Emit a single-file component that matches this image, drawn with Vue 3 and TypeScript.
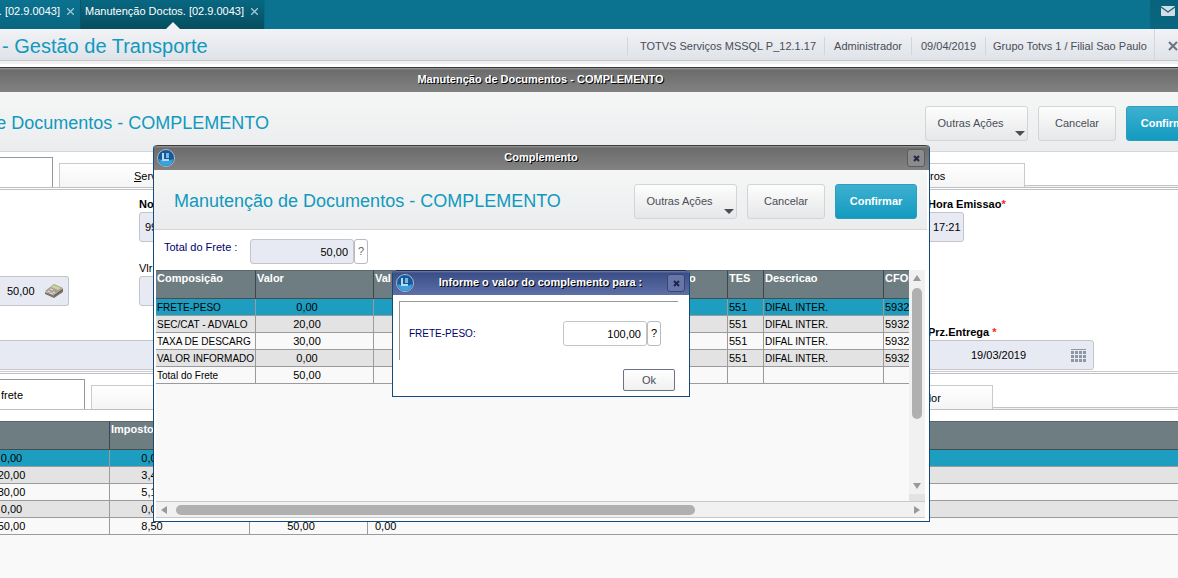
<script setup lang="ts">
import { ref } from 'vue'

interface FreightRow {
  name: string
  value: string
  tes: string
  description: string
  cfop: string
}

const freightRows: FreightRow[] = [
  { name: 'FRETE-PESO', value: '0,00', tes: '551', description: 'DIFAL INTER.', cfop: '5932' },
  { name: 'SEC/CAT - ADVALO', value: '20,00', tes: '551', description: 'DIFAL INTER.', cfop: '5932' },
  { name: 'TAXA DE DESCARG', value: '30,00', tes: '551', description: 'DIFAL INTER.', cfop: '5932' },
  { name: 'VALOR INFORMADO', value: '0,00', tes: '551', description: 'DIFAL INTER.', cfop: '5932' },
  { name: 'Total do Frete', value: '50,00', tes: '', description: '', cfop: '' },
]

const totalRows: string[][] = [
  ['0,00', '0,00', '', ''],
  ['20,00', '3,40', '', ''],
  ['30,00', '5,10', '', ''],
  ['0,00', '0,00', '', ''],
  ['50,00', '8,50', '50,00', '0,00'],
]

const session: string[] = [
  'TOTVS Serviços MSSQL P_12.1.17',
  'Administrador',
  '09/04/2019',
  'Grupo Totvs 1 / Filial Sao Paulo',
]

const total = ref('50,00')
const amount = ref('100,00')
const deliveryDate = ref('19/03/2019')
const issueTime = ref('17:21')
const docValue = ref('50,00')
const docNumber = ref('99')
const docFee = ref('')
const notes = ref('')
</script>

<template>
  <div class="app">
    <nav class="topbar">
      <div class="top-tab first">
        <a href="#">. [02.9.0043]</a>
        <button type="button" aria-label="Fechar aba">
          <svg width="7" height="7" viewBox="0 0 7 7"><path d="M0 0L7 7M7 0L0 7" stroke="#9fc6d2" stroke-width="1.3" /></svg>
        </button>
      </div>
      <div class="top-tab active">
        <a href="#">Manutenção Doctos. [02.9.0043]</a>
        <button type="button" aria-label="Fechar aba">
          <svg width="7" height="7" viewBox="0 0 7 7"><path d="M0 0L7 7M7 0L0 7" stroke="#9fc6d2" stroke-width="1.3" /></svg>
        </button>
        <i class="pointer"></i>
      </div>
      <button class="mail" type="button" aria-label="Mensagens">
        <svg width="14" height="10" viewBox="0 0 14 10">
          <path d="M0 1Q0 0 1 0H13Q14 0 14 1V9Q14 10 13 10H1Q0 10 0 9Z" fill="#d3dde3" />
          <path d="M0 1L7 6L14 1" fill="none" stroke="#0a6a86" stroke-width="1.4" />
        </svg>
      </button>
    </nav>

    <header class="session">
      <h1>- Gestão de Transporte</h1>
      <ul>
        <li v-for="item in session" :key="item"><span>{{ item }}</span></li>
      </ul>
      <button class="leave" type="button" aria-label="Sair">
        <svg width="10" height="10" viewBox="0 0 10 10"><path d="M1 1L9 9M9 1L1 9" stroke="#6b7380" stroke-width="2" /></svg>
      </button>
    </header>

    <main class="window">
      <div class="titlebar wide"><strong>Manutenção de Documentos - COMPLEMENTO</strong></div>
      <div class="toolbar page-toolbar">
        <h2><span>e Documentos - COMPLEMENTO</span></h2>
        <div class="actions">
          <button class="btn more" type="button">Outras Ações</button>
          <button class="btn cancel" type="button">Cancelar</button>
          <button class="btn primary" type="button">Confirmar</button>
        </div>
      </div>

      <div class="strip">
        <button class="tab current" type="button" aria-label="Aba atual"></button>
        <button class="tab middle" type="button"><u>S</u>erv</button>
        <button class="tab last" type="button">ros</button>
        <i class="rest"></i>
      </div>

      <form class="doc-form" @submit.prevent>
        <div class="left"></div>
        <div class="mid field">
          <label class="required" for="doc-number">No</label>
          <input id="doc-number" v-model="docNumber" class="box number" />
        </div>
        <div class="right field">
          <label class="required" for="issue-time">Hora Emissao<em>*</em></label>
          <input id="issue-time" v-model="issueTime" class="box time" />
        </div>

        <div class="left field">
          <div class="box value">
            <input v-model="docValue" aria-label="Valor" />
            <button type="button" aria-label="Calculadora">
              <svg width="19" height="14" viewBox="0 0 19 14">
                <path d="M0 8L9 11L18 5V8L9 14L0 10Z" fill="#7d716a" />
                <path d="M0 7L9 0L18 4L9 12Z" fill="#a99f94" />
                <path d="M9 1L16 4L13 6L6 3Z" fill="#c3d89a" />
                <path d="M3 7L5 8M5 5L8 6M5 9L8 10M8 8L10 9" stroke="#e8e0d8" stroke-width="1.2" />
                <path d="M9 12L18 5" stroke="#5f554f" stroke-width="1" />
              </svg>
            </button>
          </div>
        </div>
        <div class="mid field">
          <label for="doc-fee">Vlr</label>
          <input id="doc-fee" v-model="docFee" class="box number" />
        </div>
        <div class="right"></div>

        <div class="notes field">
          <input v-model="notes" class="box" aria-label="Observações" />
        </div>
        <div class="right field">
          <label class="required" for="delivery">Prz.Entrega <em>*</em></label>
          <div class="box date">
            <input id="delivery" v-model="deliveryDate" />
            <button type="button" aria-label="Calendário">
              <svg width="15" height="13" viewBox="0 0 15 13" fill="#8d96a3">
                <path d="M0 0H15V1H0Z" />
                <path d="M0 2h3v3H0zM4 2h3v3H4zM8 2h3v3H8zM12 2h3v3h-3zM0 6h3v3H0zM4 6h3v3H4zM8 6h3v3H8zM12 6h3v3h-3zM0 10h3v3H0zM4 10h3v3H4zM8 10h3v3H8zM12 10h3v3h-3z" />
              </svg>
            </button>
          </div>
        </div>
      </form>

      <div class="strip lower">
        <button class="tab current" type="button">frete</button>
        <button class="tab middle" type="button" aria-label="Aba"></button>
        <button class="tab last" type="button">dor</button>
        <i class="rest"></i>
      </div>

      <div class="page-grid">
        <table class="grid">
          <colgroup>
            <col class="p1" /><col class="p2" /><col class="p3" /><col />
          </colgroup>
          <thead>
            <tr><th></th><th>Imposto</th><th class="plain"></th><th class="plain"></th></tr>
          </thead>
          <tbody>
            <tr v-for="(row, index) in totalRows" :key="index">
              <td v-for="(cell, column) in row" :key="column" :class="'c' + column"><div>{{ cell }}</div></td>
            </tr>
          </tbody>
        </table>
      </div>
    </main>

    <section class="dialog outer" role="dialog" aria-label="Complemento">
      <div class="titlebar">
        <svg class="orb" width="18" height="18" viewBox="0 0 18 18">
          <circle cx="9" cy="9" r="8.5" fill="#17589a" stroke="#a9bccd" />
          <path d="M2 10Q9 14 16 10A7 7 0 0 1 2 10Z" fill="#38a3dc" />
          <path d="M5 4L7 4V10H12V12H5Z" fill="#b5daf0" />
          <path d="M9 4L12 4V9H9Z" fill="#78b8e0" />
        </svg>
        <strong>Complemento</strong>
        <button class="close" type="button" aria-label="Fechar">
          <svg width="7" height="7" viewBox="0 0 7 7"><path d="M1 1L6 6M6 1L1 6" stroke="#20264a" stroke-width="2" /></svg>
        </button>
      </div>
      <div class="toolbar">
        <h2>Manutenção de Documentos - COMPLEMENTO</h2>
        <div class="actions">
          <button class="btn more" type="button">Outras Ações</button>
          <button class="btn cancel" type="button">Cancelar</button>
          <button class="btn primary" type="button">Confirmar</button>
        </div>
      </div>
      <div class="total-row">
        <label for="total">Total do Frete :</label>
        <input id="total" v-model="total" class="num" />
        <button class="help" type="button">?</button>
      </div>
      <div class="grid-area">
        <div class="viewport">
          <table class="grid">
            <colgroup>
              <col class="g1" /><col class="g2" /><col class="g3" /><col class="g4" /><col class="g5" /><col class="g6" /><col class="g7" />
            </colgroup>
            <thead>
              <tr>
                <th>Composição</th><th>Valor</th><th>Val</th><th>o</th><th>TES</th><th>Descricao</th><th>CFOP</th>
              </tr>
            </thead>
            <tbody>
              <tr v-for="row in freightRows" :key="row.name">
                <td class="caps">{{ row.name }}</td>
                <td class="c2">{{ row.value }}</td>
                <td></td>
                <td></td>
                <td>{{ row.tes }}</td>
                <td class="caps">{{ row.description }}</td>
                <td>{{ row.cfop }}</td>
              </tr>
            </tbody>
          </table>
        </div>
        <div class="vscroll">
          <i class="arrow up"></i>
          <i class="thumb"></i>
          <i class="arrow down"></i>
        </div>
      </div>
      <div class="hscroll">
        <i class="arrow back"></i>
        <i class="thumb"></i>
        <i class="arrow next"></i>
      </div>
    </section>

    <section class="dialog inner" role="dialog" aria-label="Informe o valor do complemento para :">
      <div class="titlebar">
        <svg class="orb" width="18" height="18" viewBox="0 0 18 18">
          <circle cx="9" cy="9" r="8.5" fill="#17589a" stroke="#a9bccd" />
          <path d="M2 10Q9 14 16 10A7 7 0 0 1 2 10Z" fill="#38a3dc" />
          <path d="M5 4L7 4V10H12V12H5Z" fill="#b5daf0" />
          <path d="M9 4L12 4V9H9Z" fill="#78b8e0" />
        </svg>
        <strong>Informe o valor do complemento para :</strong>
        <button class="close" type="button" aria-label="Fechar">
          <svg width="7" height="7" viewBox="0 0 7 7"><path d="M1 1L6 6M6 1L1 6" stroke="#20264a" stroke-width="2" /></svg>
        </button>
      </div>
      <div class="group">
        <label for="amount">FRETE-PESO:</label>
        <input id="amount" v-model="amount" class="num" />
        <button class="help" type="button">?</button>
      </div>
      <div class="footer"><button class="ok" type="button">Ok</button></div>
    </section>
  </div>
</template>

<style>
body {
  margin: 0;
}
</style>

<style scoped>
.app {
  position: relative;
  display: flex;
  flex-direction: column;
  min-height: 100vh;
  overflow: hidden;
  background: #fff;
  color: #000;
  font: 11px/15px "Liberation Sans", Arial, sans-serif;
}
.app *,
.app *::after {
  box-sizing: border-box;
}
button,
input {
  margin: 0;
  padding: 0;
  border: 0;
  background: none;
  color: inherit;
  font: inherit;
}
input {
  min-width: 0;
}
h1,
h2,
ul {
  margin: 0;
  padding: 0;
  font-weight: normal;
  white-space: nowrap;
}
svg,
i {
  display: block;
}

/* top bar */
.topbar {
  display: flex;
  height: 29px;
  background: #0b7290;
}
.top-tab {
  position: relative;
  display: flex;
  align-items: center;
  justify-content: flex-end;
  gap: 7px;
  height: 29px;
  padding: 0 6px 6px 0;
  border-right: 1px solid #07566d;
  background: linear-gradient(#0b7290, #096580);
  color: #fff;
}
.top-tab a {
  color: #fff;
  text-decoration: none;
  white-space: nowrap;
}
.top-tab.first {
  width: 81px;
}
.top-tab.active {
  width: 184px;
  border-right-color: #096a86;
  background: linear-gradient(#086882, #064d5e);
}
.pointer {
  position: absolute;
  bottom: 0;
  left: 85px;
  border: 7px solid transparent;
  border-top: 0;
  border-bottom-color: #f1f2f5;
}
.mail {
  display: flex;
  justify-content: center;
  width: 28px;
  height: 29px;
  margin-left: auto;
  padding: 6px 0 0 8px;
  background: linear-gradient(#08627c, #0a6680);
}

/* session header */
.session {
  display: flex;
  align-items: center;
  height: 32px;
  overflow: hidden;
  border-bottom: 1px solid #c3c7cb;
  background: linear-gradient(#f1f2f5, #dfe3e8);
}
h1 {
  flex: 1;
  padding: 2px 2px 0;
  color: #1199be;
  font-size: 20px;
  line-height: 24px;
}
.session ul {
  display: flex;
  padding-top: 2px;
  list-style: none;
  color: #4a4d57;
}
.session li {
  display: flex;
  align-items: center;
  justify-content: center;
  width: 87px;
  height: 18px;
  padding-top: 1px;
  border-left: 1px solid #d2d5d9;
}
.session li:first-child {
  width: 197px;
  padding-left: 4px;
}
.session li:nth-child(3) {
  width: 74px;
}
.session li:nth-child(4) {
  width: 169px;
}
.leave {
  display: flex;
  flex: 0 0 21px;
  align-items: center;
  align-self: stretch;
  padding: 3px 0 0 13px;
  border-left: 1px solid #d2d5d9;
}
.leave svg {
  flex: none;
}

/* windows */
.window {
  display: flex;
  flex: 1;
  flex-direction: column;
  border-top: 3px solid #f0f0f0;
}
.titlebar {
  display: flex;
  align-items: center;
  height: 25px;
  border-top: 1px solid #3a3a3a;
  background: linear-gradient(#9c9c9c, #6c6c6c 2px, #828282);
  color: #fff;
  text-shadow: 1px 1px 0 #000;
}
.titlebar strong {
  flex: 1;
  padding-bottom: 2px;
  text-align: center;
}
.titlebar.wide {
  margin-top: 3px;
}
.titlebar.wide strong {
  flex: 0 1 1081px;
}
.toolbar {
  display: flex;
  align-items: center;
  justify-content: space-between;
  height: 60px;
  border-bottom: 1px solid #d6d7d8;
  background: linear-gradient(#f5f7f6, #ebecee);
}
h2 {
  color: #1199be;
  font-size: 18px;
  line-height: 22px;
}
.page-toolbar {
  padding-top: 4px;
  overflow: hidden;
}
.page-toolbar h2 {
  display: flex;
  justify-content: flex-end;
  width: 269px;
  padding-bottom: 2px;
}
.actions {
  display: flex;
  gap: 10px;
}
.page-toolbar .actions {
  margin-right: -30px;
}
.btn {
  position: relative;
  height: 35px;
  border: 1px solid #d3d4d6;
  border-radius: 3px;
  background: linear-gradient(#fdfdfd, #e6e7e8);
  color: #4a4d57;
}
.btn.more {
  width: 103px;
  padding-right: 12px;
}
.btn.more::after {
  position: absolute;
  right: 2px;
  bottom: 4px;
  border: 5px solid transparent;
  border-top-color: #4a4d57;
  border-bottom: 0;
  content: "";
}
.btn.cancel {
  width: 78px;
}
.btn.primary {
  width: 82px;
  border-color: #2b9dbd;
  background: linear-gradient(#3eb0d0, #129bc0);
  color: #fff;
  font-weight: bold;
}

/* tab strips */
.strip {
  display: flex;
  align-items: flex-end;
  gap: 6px;
  height: 36px;
  border-bottom: 1px solid #bebfc1;
}
.tab {
  flex: 0 0 835px;
  height: 24px;
  padding: 1px 0 0 74px;
  border: 1px solid #c9cacc;
  border-bottom: 0;
  background: linear-gradient(#fff, #f4f4f4);
  text-align: left;
}
.tab.current {
  flex-basis: 53px;
  height: 30px;
  padding-left: 1px;
  border-color: #97989a;
  border-left: 0;
  background: #fff;
}
.tab.last {
  flex-basis: 125px;
  padding-left: 29px;
}
.lower .current {
  flex-basis: 85px;
}
.lower .middle {
  flex-basis: 803px;
}
.lower .last {
  flex-basis: 93px;
  padding-left: 24px;
}
.rest {
  flex: 1;
  height: 2px;
  margin-left: -6px;
  border-top: 1px solid #c3c4c6;
  background: #f2f2f2;
}

/* document form */
.doc-form {
  display: grid;
  grid-template-columns: 139px 789px 1fr;
  grid-auto-rows: 45px;
  row-gap: 19px;
  height: 185px;
  margin-top: 1px;
  padding-top: 7px;
  border-top: 1px solid #bebfc1;
  border-bottom: 1px solid #bebfc1;
}
.doc-form::after {
  grid-column: 1 / -1;
  height: 1px;
  margin-top: -18px;
  background: #c9cacc;
  content: "";
}
.field {
  display: flex;
  flex-direction: column;
  align-items: flex-start;
  justify-content: flex-end;
}
.required {
  font-weight: bold;
}
em {
  color: #f22;
  font-style: normal;
}
.box {
  height: 30px;
  border: 1px solid #c3c5c9;
  border-radius: 3px;
  background: #e7eaf3;
}
.box.number {
  width: 300px;
  padding-left: 5px;
}
.box.time {
  width: 36px;
  padding-left: 4px;
}
.box.value {
  display: flex;
  align-items: center;
  width: 69px;
  padding-left: 7px;
  border-left: 0;
  border-radius: 0 3px 3px 0;
}
.value input {
  width: 38px;
}
.box.date {
  display: flex;
  align-items: center;
  width: 166px;
}
.date input {
  width: 142px;
  padding-left: 42px;
}
.notes {
  grid-column: 1 / 3;
}
.notes .box {
  width: 700px;
  border-left: 0;
  border-radius: 0;
}

/* grids */
.page-grid {
  flex: 1;
  margin-top: 11px;
  background: #f9f9f9;
}
.grid {
  width: 100%;
  border-collapse: separate;
  border-spacing: 0;
  table-layout: fixed;
}
.grid th {
  height: 29px;
  padding: 0 1px;
  overflow: hidden;
  border-top: 1px solid #5f6669;
  border-right: 1px solid #3e4648;
  border-bottom: 1px solid #474c4d;
  background: #6e7d81;
  color: #fff;
  text-align: left;
  vertical-align: top;
  white-space: nowrap;
}
.grid th.plain,
.grid th:last-child {
  border-right: 0;
}
.grid td {
  height: 17px;
  padding: 0 1px;
  overflow: hidden;
  border-right: 1px solid #9b9b9b;
  border-bottom: 1px solid #9b9b9b;
  background: #f9f9f9;
  white-space: nowrap;
}
.grid td:last-child,
.page-grid tr:not(:last-child) .c2 {
  border-right: 0;
}
.grid tr:nth-child(even) td {
  background: #e3e3e3;
}
.grid tbody tr:first-child td {
  background: #1d9dbf;
}
.grid .caps {
  font-size: 10px;
}
.p1 {
  width: 110px;
}
.p2 {
  width: 140px;
}
.p3 {
  width: 118px;
}
.grid .c0 {
  padding: 0;
}
.c0 div {
  display: flex;
  justify-content: center;
  width: 23px;
}
.grid .c1 {
  padding-right: 56px;
  text-align: center;
}
.grid .c2 {
  padding-right: 16px;
  text-align: center;
}
.grid .c3 {
  padding-left: 7px;
}

/* dialogs */
.dialog {
  position: absolute;
  border: 1px solid #154a7c;
  border-top: 0;
  border-radius: 4px 4px 0 0;
  background: #fff;
}
.dialog .titlebar {
  padding: 0 4px 0 3px;
  border-radius: 4px 4px 0 0;
}
.close {
  display: flex;
  align-items: center;
  justify-content: center;
  width: 18px;
  height: 18px;
  border: 1px solid #5c5c5c;
  border-radius: 3px;
  background: #8b8b8b;
}
.outer {
  top: 145px;
  left: 153px;
  width: 777px;
}
.outer .toolbar {
  margin-right: 2px;
  padding: 3px 10px 0 20px;
}
.total-row {
  display: flex;
  align-items: center;
  height: 40px;
  padding: 3px 0 0 10px;
}
label {
  white-space: nowrap;
}
.dialog label {
  color: #00006e;
}
.total-row label {
  width: 86px;
  padding-bottom: 8px;
}
.num {
  width: 104px;
  height: 25px;
  padding-right: 5px;
  border: 1px solid #c3c5c9;
  border-radius: 3px;
  text-align: right;
}
.total-row .num {
  background: #e7eaf3;
}
.help {
  width: 14px;
  height: 25px;
  border: 1px solid #b8babd;
  border-radius: 3px;
  background: #fff;
}
.total-row .help {
  color: #666;
}
.grid-area {
  display: flex;
  height: 231px;
  margin: 0 4px 0 2px;
}
.viewport {
  flex: 1;
  overflow: hidden;
  background: #f9f9f9;
}
.viewport .grid {
  width: 788px;
}
.g1 {
  width: 100px;
}
.g2 {
  width: 118px;
}
.g3 {
  width: 314px;
}
.g4 {
  width: 40px;
}
.g5 {
  width: 36px;
}
.g6 {
  width: 120px;
}
.g7 {
  width: 60px;
}
.vscroll {
  display: flex;
  flex-direction: column;
  align-items: center;
  width: 16px;
  padding: 5px 0;
  border-bottom: 7px solid #e3e3e3;
  background: #f1f1f1;
}
.arrow {
  border: 4px solid transparent;
}
.arrow.up {
  border-top: 0;
  border-bottom: 6px solid #999;
}
.arrow.down {
  margin-top: auto;
  border-top: 6px solid #999;
  border-bottom: 0;
}
.arrow.back {
  border-right: 6px solid #999;
  border-left: 0;
}
.arrow.next {
  margin-left: auto;
  border-right: 0;
  border-left: 6px solid #999;
}
.thumb {
  border-radius: 5px;
  background: #b0b0b0;
}
.vscroll .thumb {
  width: 10px;
  height: 131px;
  margin-top: 7px;
}
.hscroll {
  display: flex;
  align-items: center;
  height: 17px;
  margin: 0 4px 3px 2px;
  padding: 0 5px;
  border-top: 1px solid #c8c8c8;
  border-bottom: 1px solid #c8c8c8;
  background: #f1f1f1;
}
.hscroll .thumb {
  width: 519px;
  height: 10px;
  margin-left: 9px;
}

.inner {
  top: 270px;
  left: 392px;
  width: 298px;
}
.inner .titlebar {
  border-top-color: #222b4a;
  background: linear-gradient(#6f7fb0, #3c4e87 2px, #5d6fa6);
}
.inner .close {
  border-color: #39456f;
  background: #6676a8;
}
.group {
  display: flex;
  align-items: center;
  height: 59px;
  margin: 6px 11px 0 6px;
  padding: 5px 17px 0 9px;
  border-top: 1px solid #999;
  border-left: 1px solid #999;
}
.group label {
  flex: 1;
  font-size: 10px;
}
.group .num {
  width: 84px;
}
.footer {
  display: flex;
  justify-content: flex-end;
  padding: 9px 14px 5px;
}
.ok {
  width: 52px;
  height: 22px;
  border: 1px solid #6b7482;
  border-radius: 2px;
  background: linear-gradient(#fff, #f0f0f0);
  color: #4a4d57;
}
</style>
